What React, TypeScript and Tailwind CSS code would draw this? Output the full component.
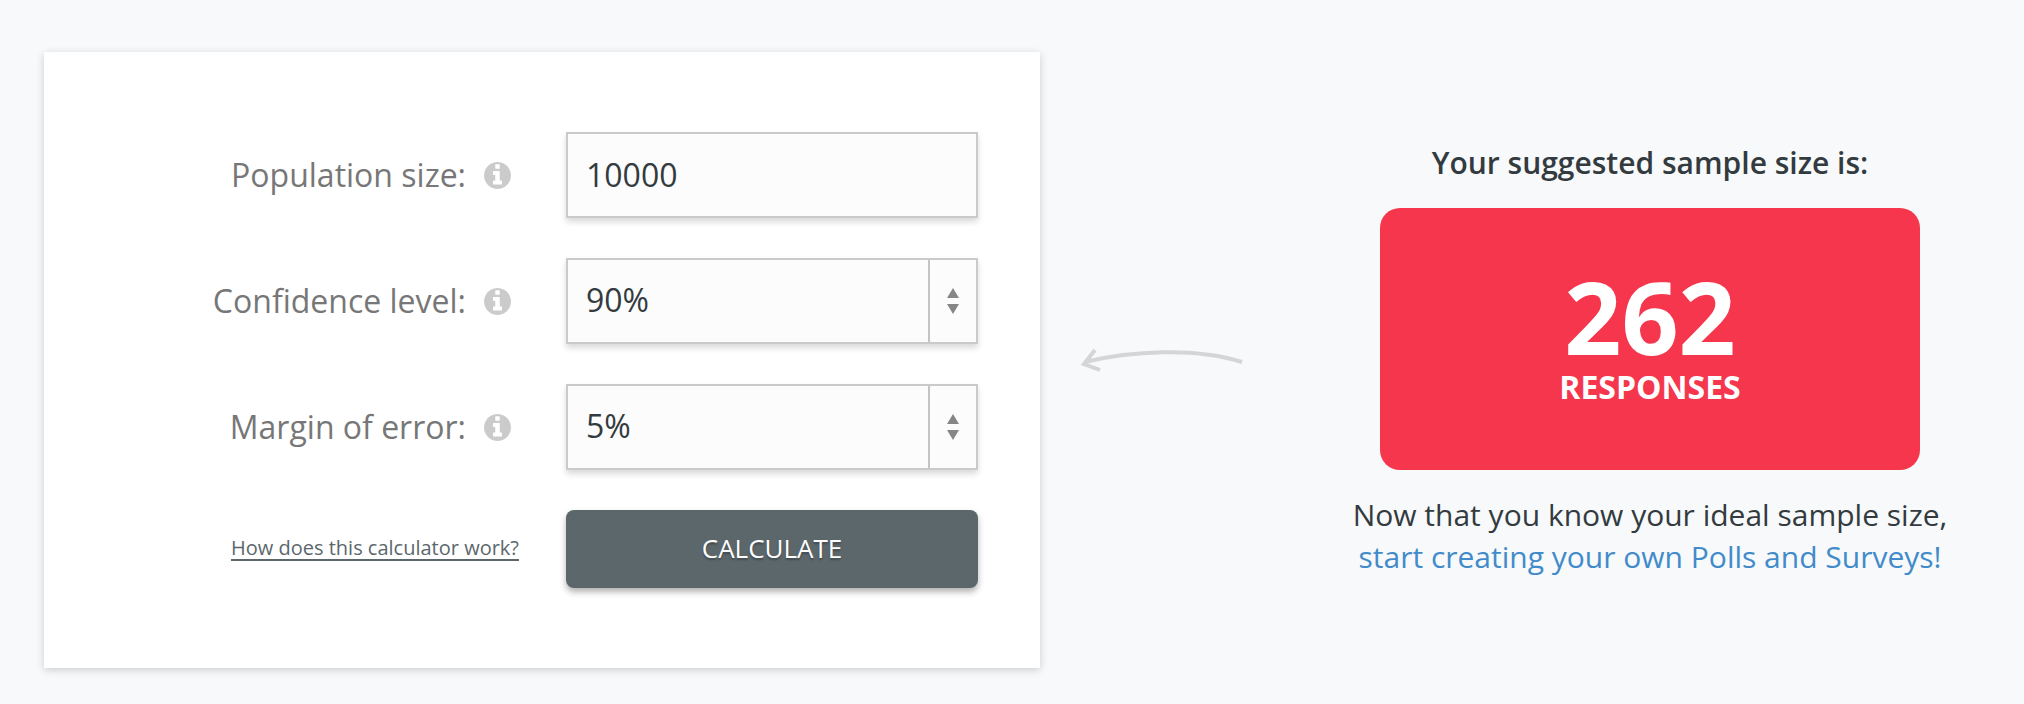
import React, { useState } from 'react';

interface FieldRowProps {
  id: string;
  label: string;
  children: React.ReactNode;
}

const InfoIcon: React.FC = () => (
  <svg viewBox="128 128 1536 1536" className="h-[27px] w-[27px] fill-[#cbcbcb]" aria-hidden="true">
    <path d="M1152 1376v-160q0-14-9-23t-23-9h-96v-512q0-14-9-23t-23-9h-320q-14 0-23 9t-9 23v160q0 14 9 23t23 9h96v320h-96q-14 0-23 9t-9 23v160q0 14 9 23t23 9h448q14 0 23-9t9-23zm-128-896v-192q0-14-9-23t-23-9h-192q-14 0-23 9t-9 23v192q0 14 9 23t23 9h192q14 0 23-9t9-23zm640 416q0 209-103 385.5t-279.5 279.5-385.5 103-385.5-103-279.5-279.5-103-385.5 103-385.5 279.5-279.5 385.5-103 385.5 103 279.5 279.5 103 385.5z" />
  </svg>
);

const ArrowIcon: React.FC = () => (
  <svg viewBox="0 0 164 28" className="h-7 w-[164px]" fill="none" stroke="#d3d5d6" aria-hidden="true">
    <path d="M5 16C50 5 115 1 162 16" strokeWidth="4" />
    <path d="M15 4L4 18L20 24" strokeWidth="4" />
  </svg>
);

const FieldRow: React.FC<FieldRowProps> = ({ id, label, children }) => (
  <>
    <div className="flex items-center justify-end gap-[18px] pr-2">
      <label htmlFor={id} className="text-[32px] leading-[42px] text-[#777777]">
        {label}
      </label>
      <button type="button" aria-label={`About ${label}`} className="cursor-pointer">
        <InfoIcon />
      </button>
    </div>
    {children}
  </>
);

interface SelectBoxProps {
  id: string;
  value: string;
  options: string[];
  onChange: (value: string) => void;
}

const SelectBox: React.FC<SelectBoxProps> = ({ id, value, options, onChange }) => (
  <div className="relative">
    <select
      id={id}
      value={value}
      onChange={(e) => onChange(e.target.value)}
      className="block h-[86px] w-full appearance-none border-2 border-[#cacaca] bg-[#fcfcfc] pb-0.5 pl-[18px] pr-14 text-[32px] text-[#333b3f] shadow-[0_4px_6px_rgba(0,0,0,0.15)]"
    >
      {options.map((option) => (
        <option key={option}>{option}</option>
      ))}
    </select>
    <div className="pointer-events-none absolute inset-y-0.5 right-0.5 flex w-12 items-center justify-center border-l-2 border-[#c4c4c4]">
      <svg viewBox="0 0 12 26" className="h-[26px] w-3 fill-[#868686]" aria-hidden="true">
        <path d="M6 0L12 10H0zM6 26L12 16H0z" />
      </svg>
    </div>
  </div>
);

const App: React.FC = () => {
  const [population, setPopulation] = useState('10000');
  const [confidence, setConfidence] = useState('90%');
  const [margin, setMargin] = useState('5%');

  return (
    <main className="grid min-h-screen grid-cols-[249fr_61fr_183fr] items-center bg-[#f7f9fb] pt-[52px] pr-2 pb-9 pl-11 font-['Open_Sans',sans-serif] text-[#333b3f]">
      {/* Calculator */}
      <form
        onSubmit={(e) => e.preventDefault()}
        className="grid grid-cols-[1fr_412px] gap-x-[47px] gap-y-10 bg-white py-20 pr-[62px] pl-10 shadow-[0_2px_8px_rgba(0,0,0,0.18)]"
      >
        <FieldRow id="population" label="Population size:">
          <input
            id="population"
            type="text"
            value={population}
            onChange={(e) => setPopulation(e.target.value)}
            className="h-[86px] w-full border-2 border-[#cacaca] bg-[#fcfcfc] px-[18px] pb-0.5 text-[32px] shadow-[0_4px_6px_rgba(0,0,0,0.15)]"
          />
        </FieldRow>
        <FieldRow id="confidence" label="Confidence level:">
          <SelectBox id="confidence" value={confidence} options={['80%', '85%', '90%', '95%', '99%']} onChange={setConfidence} />
        </FieldRow>
        <FieldRow id="margin" label="Margin of error:">
          <SelectBox id="margin" value={margin} options={['1%', '2%', '3%', '4%', '5%', '10%']} onChange={setMargin} />
        </FieldRow>
        <div className="flex items-center justify-end">
          <a href="#how" className="border-b-2 border-[#5c676c] text-[20px] leading-[22px] text-[#5c676c]">
            How does this calculator work?
          </a>
        </div>
        <button
          type="submit"
          className="h-[78px] cursor-pointer rounded-lg bg-[#5c676c] pb-0.5 text-[26px] text-white shadow-[0_4px_6px_rgba(0,0,0,0.3)] text-shadow-[0_2px_2px_rgba(0,0,0,0.3)]"
        >
          CALCULATE
        </button>
      </form>

      <div className="flex justify-center">
        <ArrowIcon />
      </div>

      {/* Result */}
      <section className="flex flex-col items-center text-center text-[30px] leading-[42px]">
        <h2 className="font-semibold">Your suggested sample size is:</h2>
        <div className="my-6 flex h-[262px] w-[540px] max-w-full flex-col items-center justify-center rounded-[20px] bg-[#f5364c] pb-1 text-white">
          <span className="text-[100px] leading-[100px] font-bold">262</span>
          <span className="text-[32px] font-bold">RESPONSES</span>
        </div>
        <p>
          Now that you know your ideal sample size,
          <br />
          <a href="#surveys" className="text-[#428bca]">
            start creating your own Polls and Surveys!
          </a>
        </p>
      </section>
    </main>
  );
};

export default App;
